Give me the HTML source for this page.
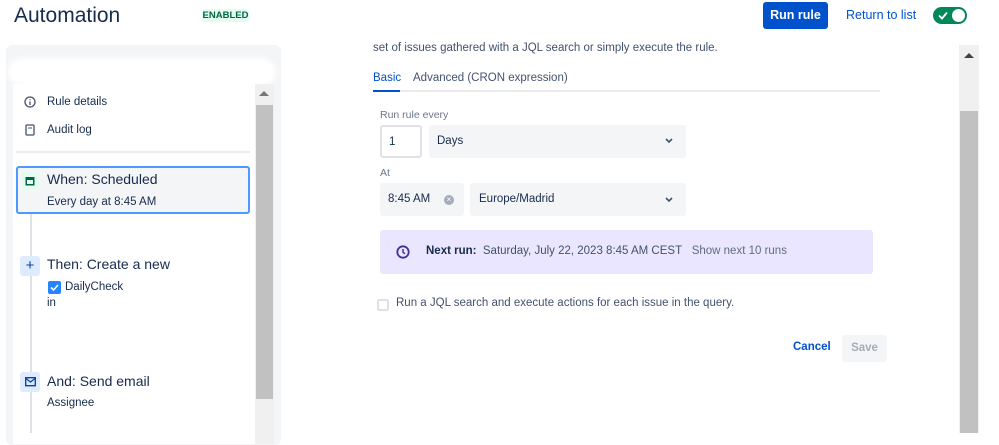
<!DOCTYPE html>
<html><head><meta charset="utf-8"><style>
*{box-sizing:border-box;margin:0;padding:0}
body{width:999px;height:433px;overflow:hidden;background:#fff;font-family:"Liberation Sans",sans-serif;color:#172B4D;position:relative}
.a{position:absolute;white-space:nowrap}
.s12{font-size:11.5px}.s13{font-size:13px}.s14{font-size:14px}
</style></head><body>
<div class="a" style="left:14px;top:4px;font-size:21px;color:#172B4D">Automation</div>
<div class="a" style="left:202px;top:9px;width:47px;height:13px;background:#E3FCEF;color:#006644;font-size:9.5px;font-weight:bold;text-align:center;line-height:13px;border-radius:3px">ENABLED</div>
<div class="a" style="left:763px;top:2px;width:65px;height:27px;background:#0052CC;border-radius:3px;color:#fff;font-size:12.5px;font-weight:bold;text-align:center;line-height:27px">Run rule</div>
<div class="a" style="left:846px;top:8px;color:#0052CC;font-size:12.5px">Return to list</div>
<div class="a" style="left:933px;top:7px;width:34px;height:17px;background:#00875A;border-radius:9px">
<svg class="a" style="left:5px;top:4px" width="10" height="9" viewBox="0 0 10 9"><path d="M1 4.5L4 7.5L9 1.5" stroke="#fff" stroke-width="1.8" fill="none"/></svg>
<div class="a" style="left:19px;top:2px;width:13px;height:13px;border-radius:50%;background:#fff"></div></div>

<div class="a" style="left:6px;top:45px;width:275px;height:400px;background:#F4F5F7;border-radius:6px"></div>
<div class="a" style="left:8px;top:58px;width:268px;height:28px;background:#fff;border-radius:14px;filter:blur(3px)"></div>
<div class="a" style="left:13px;top:84px;width:242px;height:360px;background:#fff"></div>
<div class="a" style="left:255px;top:84px;width:19px;height:360px;background:#f0f0f0"></div>
<div class="a" style="left:256px;top:105px;width:17px;height:294px;background:#c1c1c1"></div>
<div class="a" style="left:259px;top:91px;border-left:5px solid transparent;border-right:5px solid transparent;border-bottom:5px solid #777"></div>
<svg class="a" style="left:24px;top:96px" width="12" height="12"><circle cx="6" cy="6" r="5" stroke="#42526E" stroke-width="1.3" fill="none"/><path d="M6 5.5V9M6 3.3v1" stroke="#42526E" stroke-width="1.3"/></svg>
<div class="a s12" style="left:47px;top:96px">Rule details</div>
<svg class="a" style="left:25px;top:124px" width="10" height="12"><rect x="1" y="1" width="8" height="10" rx="1" stroke="#42526E" stroke-width="1.3" fill="none"/><path d="M3 4h4" stroke="#42526E"/></svg>
<div class="a s12" style="left:47px;top:124px">Audit log</div>
<div class="a" style="left:16px;top:151px;width:234px;height:2px;background:#EBECF0"></div>
<div class="a" style="left:30px;top:190px;width:2px;height:243px;background:#DFE1E6"></div>
<div class="a" style="left:16px;top:166px;width:234px;height:48px;border:2px solid #4C9AFF;border-radius:3px;background:#F4F5F7"></div>
<div class="a" style="left:21px;top:172px;width:18px;height:18px;background:#E3FCEF;border-radius:3px"></div>
<svg class="a" style="left:25px;top:176px" width="10" height="10"><rect x="0.5" y="1" width="9" height="8.5" fill="#006644"/><rect x="2" y="4" width="6" height="4" fill="#E3FCEF"/></svg>
<div class="a s14" style="left:47px;top:171px">When: Scheduled</div>
<div class="a s12" style="left:47px;top:196px">Every day at 8:45 AM</div>
<div class="a" style="left:20px;top:256px;width:20px;height:20px;background:#DEEBFF;border-radius:3px;color:#0747A6;font-size:15px;text-align:center;line-height:20px">+</div>
<div class="a s14" style="left:47px;top:256px">Then: Create a new</div>
<div class="a" style="left:48px;top:281px;width:13px;height:13px;background:#2684FF;border-radius:2px"><svg width="13" height="13"><path d="M3 6.5l2.5 2.5L10 4" stroke="#fff" stroke-width="1.6" fill="none"/></svg></div>
<div class="a s12" style="left:65px;top:281px">DailyCheck</div>
<div class="a s12" style="left:47px;top:297px">in</div>
<div class="a" style="left:20px;top:372px;width:20px;height:20px;background:#DEEBFF;border-radius:3px"></div>
<svg class="a" style="left:25px;top:377px" width="11" height="10"><rect x="0.7" y="0.7" width="9.6" height="8" stroke="#0747A6" stroke-width="1.4" fill="none"/><path d="M1 1.5l4.5 3.5 4.5-3.5" stroke="#0747A6" stroke-width="1.3" fill="none"/></svg>
<div class="a s14" style="left:47px;top:373px">And: Send email</div>
<div class="a s12" style="left:47px;top:397px">Assignee</div>

<div class="a s12" style="left:373px;top:42px;color:#42526E">set of issues gathered with a JQL search or simply execute the rule.</div>
<div class="a s12" style="left:373px;top:72px;color:#0052CC">Basic</div>
<div class="a s12" style="left:413px;top:72px;color:#42526E">Advanced (CRON expression)</div>
<div class="a" style="left:373px;top:90px;width:507px;height:2px;background:#EBECF0"></div>
<div class="a" style="left:373px;top:90px;width:27px;height:2px;background:#0052CC"></div>
<div class="a" style="left:380px;top:109px;font-size:10.5px;color:#6B778C">Run rule every</div>
<div class="a s12" style="left:380px;top:125px;width:42px;height:33px;border:2px solid #DFE1E6;border-radius:3px;padding:9px 0 0 7px">1</div>
<div class="a s12" style="left:429px;top:125px;width:257px;height:33px;background:#F4F5F7;border-radius:3px;padding:10px 0 0 8px">Days</div>
<div class="a" style="left:380px;top:167px;font-size:10.5px;color:#6B778C">At</div>
<div class="a s12" style="left:380px;top:183px;width:84px;height:33px;background:#F4F5F7;border-radius:3px;padding:10px 0 0 8px">8:45 AM</div>
<div class="a" style="left:444px;top:195px;width:10px;height:10px;border-radius:50%;background:#A5ADBA;color:#fff;font-size:8px;line-height:10px;text-align:center">×</div>
<div class="a s12" style="left:470px;top:183px;width:216px;height:33px;background:#F4F5F7;border-radius:3px;padding:10px 0 0 9px">Europe/Madrid</div>
<svg class="a" style="left:665px;top:138px" width="8" height="6"><path d="M1 1l3 3 3-3" stroke="#42526E" stroke-width="1.6" fill="none"/></svg>
<svg class="a" style="left:665px;top:197px" width="8" height="6"><path d="M1 1l3 3 3-3" stroke="#42526E" stroke-width="1.6" fill="none"/></svg>
<div class="a" style="left:380px;top:230px;width:493px;height:44px;background:#EAE6FF;border-radius:3px"></div>
<svg class="a" style="left:396px;top:245px" width="14" height="14"><circle cx="7" cy="7" r="5.7" stroke="#403294" stroke-width="1.8" fill="none"/><path d="M7 4v3.3l2 1.5" stroke="#403294" stroke-width="1.5" fill="none"/></svg>
<div class="a s12" style="left:426px;top:245px;color:#172B4D"><b>Next run:</b>&nbsp; <span style="color:#42526E">Saturday, July 22, 2023 8:45 AM CEST</span>&nbsp;&nbsp; <span style="color:#5E6C84">Show next 10 runs</span></div>
<div class="a" style="left:377px;top:299px;width:12px;height:12px;border:2px solid #DFE1E6;border-radius:2px"></div>
<div class="a s12" style="left:396px;top:297px;color:#42526E">Run a JQL search and execute actions for each issue in the query.</div>
<div class="a s12" style="left:793px;top:341px;color:#0052CC;font-weight:bold">Cancel</div>
<div class="a s12" style="left:842px;top:335px;width:45px;height:27px;background:#F4F5F7;border-radius:3px;color:#A5ADBA;font-weight:bold;text-align:center;line-height:27px">Save</div>
<div class="a" style="left:959px;top:45px;width:20px;height:388px;background:#f0f0f0"></div>
<div class="a" style="left:960px;top:111px;width:18px;height:322px;background:#c1c1c1"></div>
<div class="a" style="left:964px;top:53px;border-left:5px solid transparent;border-right:5px solid transparent;border-bottom:5px solid #444"></div>
</body></html>
